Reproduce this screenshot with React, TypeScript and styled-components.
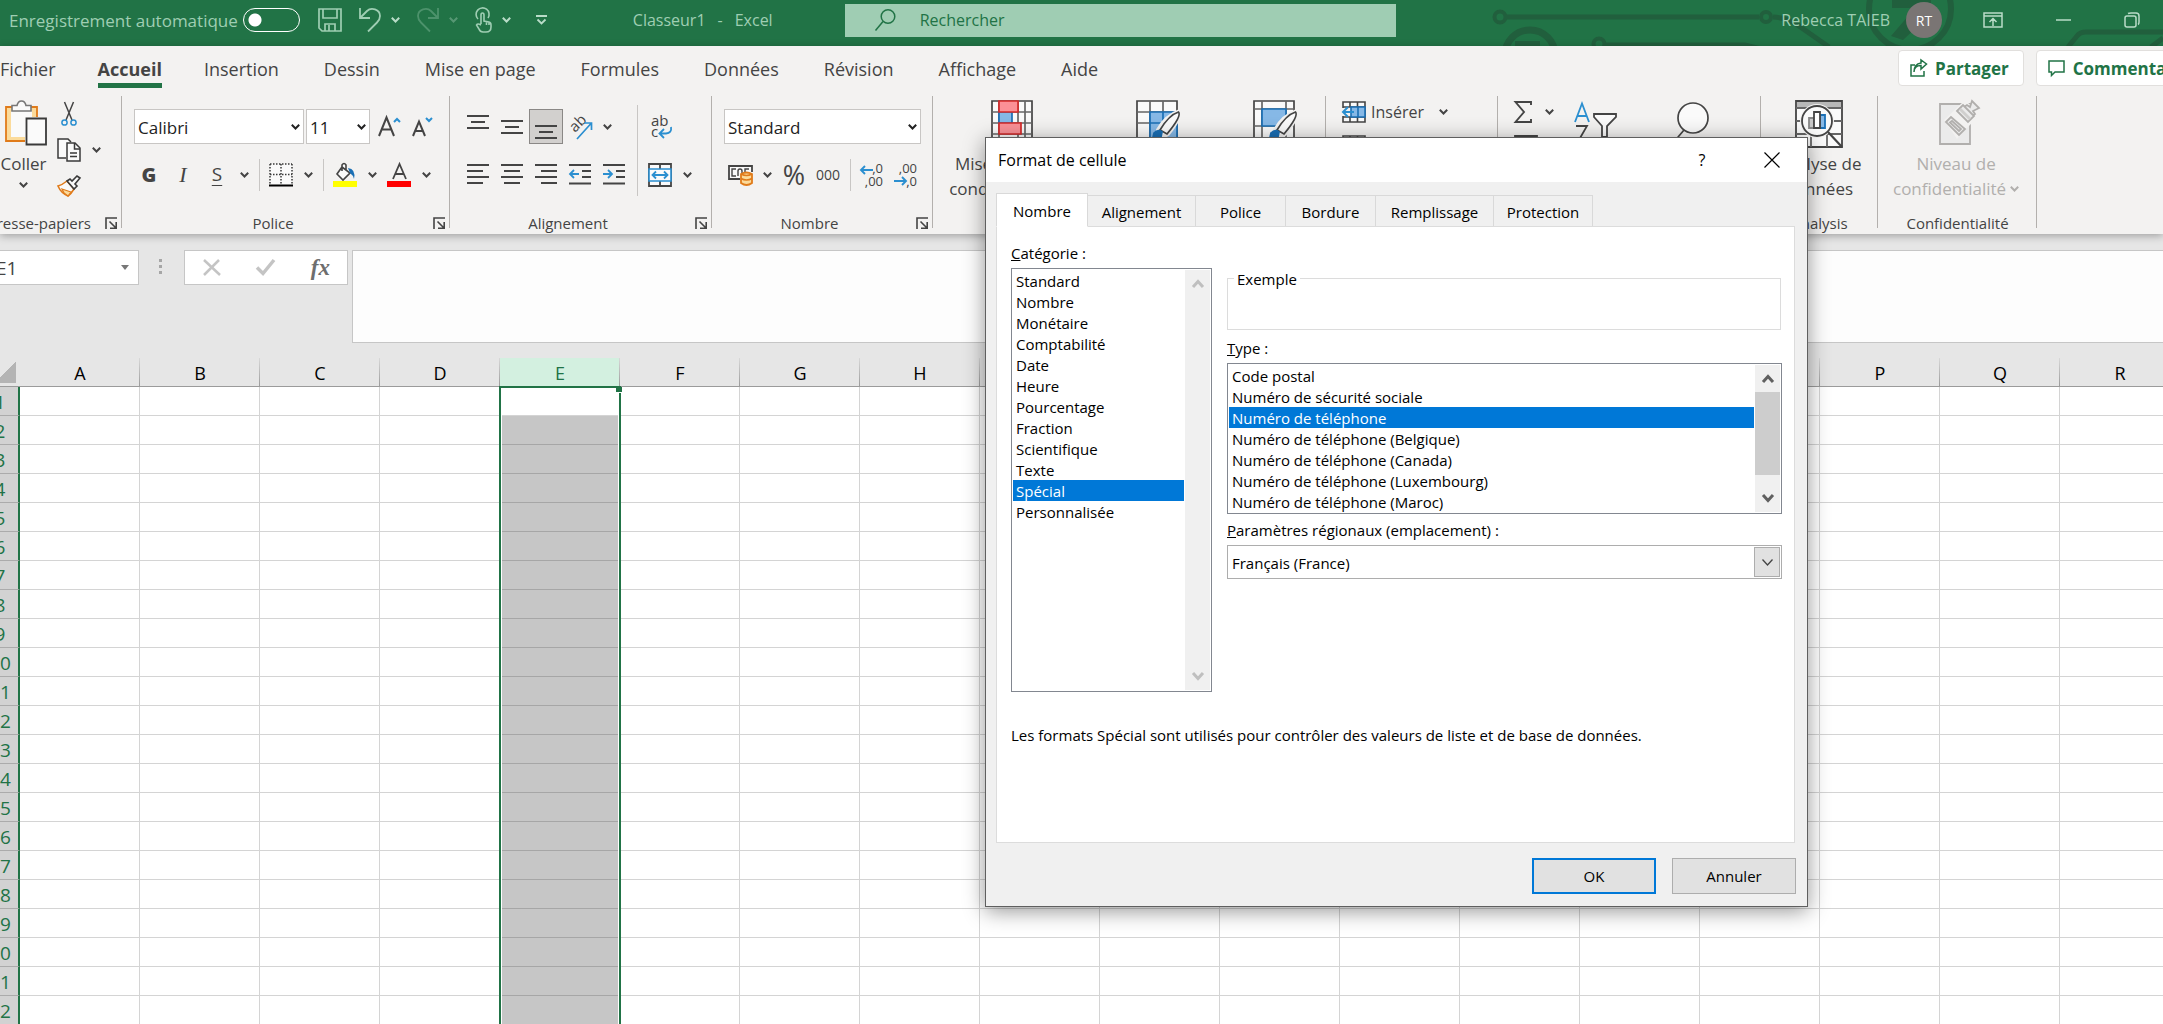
import React, { useState } from "react";
import styled, { createGlobalStyle, css } from "styled-components";

const GREEN = "#217346";
const INK = "#444444";
const BLUE = "#2b8fd0";

const GlobalStyle = createGlobalStyle`
  *, *::before, *::after { box-sizing: border-box; }
  html, body, #root { height: 100%; }
  body {
    margin: 0;
    overflow: hidden;
    font-family: "Open Sans", "Noto Sans", sans-serif;
    font-size: 15px;
    color: ${INK};
    background: #e6e6e6;
  }
  button, input, select, textarea { font: inherit; color: inherit; margin: 0; }
  svg { display: block; flex: none; overflow: visible; }
`;

const Window = styled.div`
  display: flex;
  flex-direction: column;
  height: 100vh;
  overflow: hidden;
  position: relative;
`;

const PlainButton = styled.button`
  display: flex;
  align-items: center;
  justify-content: center;
  padding: 0;
  border: 0;
  background: transparent;
  white-space: nowrap;
`;

/* ---------- title bar ---------- */

const TitleBar = styled.header`
  position: relative;
  flex: none;
  display: flex;
  align-items: center;
  height: 46px;
  padding: 0 23px 6px 9px;
  background: ${GREEN};
  color: #9fceb3;
  font-size: 16px;
  white-space: nowrap;
`;

const Circuit = styled.svg`
  position: absolute;
  top: 0;
  right: 0;
`;

const AutoSave = styled.label`
  display: flex;
  align-items: center;
  gap: 5px;
  font-size: 17px;
`;

const Toggle = styled.input`
  appearance: none;
  width: 57px;
  height: 24px;
  border: 1px solid #fff;
  border-radius: 12px;
  background: radial-gradient(circle at 11px 11px, #fff 6px, transparent 7px);
`;

const QuickAccess = styled.div`
  display: flex;
  align-items: center;
  gap: 17px;
  margin-left: 18px;
`;

const QuickPair = styled.div<{ $dim?: boolean }>`
  display: flex;
  align-items: center;
  gap: 10px;
  opacity: ${(p) => (p.$dim ? 0.35 : 1)};
`;

const CustomizeButton = styled(PlainButton)`
  margin-left: 8px;
`;

const DocTitle = styled.div`
  display: flex;
  gap: 12px;
  margin-left: 86px;
`;

const SearchBox = styled.label`
  display: flex;
  align-items: center;
  gap: 24px;
  flex: 0 1 551px;
  height: 33px;
  margin-left: 72px;
  padding-left: 30px;
  background: #9fcdb3;
  color: ${GREEN};
`;

const SearchInput = styled.input`
  flex: 1;
  min-width: 0;
  border: 0;
  padding: 0;
  outline: 0;
  background: transparent;
  &::placeholder { color: ${GREEN}; opacity: 1; }
`;

const UserArea = styled.div`
  position: relative;
  display: flex;
  align-items: center;
  gap: 16px;
  margin-left: auto;
`;

const Avatar = styled.span`
  display: flex;
  align-items: center;
  justify-content: center;
  width: 36px;
  height: 36px;
  border-radius: 50%;
  background: #7a7574;
  color: #fff;
  font-size: 14px;
`;

const WindowButtons = styled.div`
  position: relative;
  display: flex;
  align-items: center;
  gap: 53px;
  margin-left: 41px;
`;

/* ---------- ribbon ---------- */

const RibbonShell = styled.section`
  flex: none;
  position: relative;
  background: #f3f2f1;
  box-shadow: 0 2px 8px rgba(0, 0, 0, 0.3);
`;

const TabRow = styled.div`
  display: flex;
  align-items: center;
  height: 50px;
  padding-bottom: 6px;
`;

const TabList = styled.nav`
  display: flex;
  gap: 45px;
  font-size: 18px;
`;

const RibbonTab = styled.button<{ $active?: boolean }>`
  height: 40px;
  margin: ${(p) => (p.$active ? "0 -3px" : "0")};
  padding: 2px 0 0;
  border: 0;
  background: ${(p) => (p.$active ? `linear-gradient(${GREEN}, ${GREEN}) bottom / 100% 5px no-repeat` : "transparent")};
  font-weight: ${(p) => (p.$active ? 700 : 400)};
  line-height: 26px;
  white-space: nowrap;
`;

const ShareArea = styled.div`
  display: flex;
  gap: 12px;
  flex: none;
  width: 265px;
  margin-left: auto;
`;

const ShareButton = styled(PlainButton)`
  flex: none;
  gap: 8px;
  height: 36px;
  padding: 0 14px 0 11px;
  border: 1px solid #e1dfdd;
  border-radius: 4px;
  background: #fff;
  color: ${GREEN};
  font-size: 17px;
  font-weight: 700;
`;

const RibbonBody = styled.div`
  display: flex;
  height: 138px;
`;

const Group = styled.div<{ $w: number }>`
  flex: none;
  display: flex;
  flex-direction: column;
  width: ${(p) => p.$w}px;
  background: linear-gradient(#b3b0ad, #b3b0ad) right top / 1px 132px no-repeat;
`;

const GroupContent = styled.div<{ $pad?: number }>`
  flex: 1;
  display: flex;
  padding-left: ${(p) => p.$pad ?? 0}px;
`;

const GroupFoot = styled.div`
  display: flex;
  align-items: center;
  justify-content: center;
  height: 24px;
  padding: 2px 5px 0;
  font-size: 15px;
  line-height: 22px;
  white-space: nowrap;
`;

const FootLabel = styled.span<{ $end?: boolean; $launcher?: boolean }>`
  flex: 1;
  min-width: 0;
  display: flex;
  justify-content: ${(p) => (p.$end ? "flex-end" : "center")};
  padding-right: ${(p) => (p.$launcher ? 14 : 0)}px;
`;

const ToolStack = styled.div`
  display: flex;
  flex-direction: column;
  gap: 13px;
  padding-top: 13px;
`;

const ToolRow = styled.div<{ $pad?: number }>`
  display: flex;
  align-items: center;
  height: 35px;
  padding-left: ${(p) => p.$pad ?? 0}px;
`;

const ToolButton = styled(PlainButton)<{ $on?: boolean }>`
  width: 34px;
  height: 35px;
  ${(p) =>
    p.$on &&
    css`
      background: #d2d0ce;
      border: 1px solid #8a8886;
    `}
`;

const DropButton = styled(PlainButton)`
  width: 20px;
  height: 35px;
`;

const Divider = styled.span`
  width: 1px;
  height: 32px;
  margin: 0 4px 0 5px;
  background: #c8c6c4;
`;

const TallDivider = styled.span`
  width: 1px;
  height: 91px;
  margin: 9px 5px 0 6px;
  background: #c8c6c4;
`;

const ComboWrap = styled.div<{ $w: number }>`
  position: relative;
  width: ${(p) => p.$w}px;
  height: 35px;
  margin-right: 2px;
  svg {
    position: absolute;
    right: 4px;
    top: 15px;
    pointer-events: none;
  }
`;

const Combo = styled.select`
  appearance: none;
  width: 100%;
  height: 100%;
  padding: 2px 16px 0 3px;
  border: 1px solid #c8c6c4;
  border-radius: 0;
  background: #fff;
  color: #222;
  font-size: 17px;
`;

const Glyph = styled.span<{ $size: number; $weight?: number; $italic?: boolean; $line?: boolean }>`
  font-size: ${(p) => p.$size}px;
  font-weight: ${(p) => p.$weight ?? 400};
  font-style: ${(p) => (p.$italic ? "italic" : "normal")};
  font-family: ${(p) => (p.$italic ? '"Liberation Serif", serif' : "inherit")};
  text-decoration: ${(p) => (p.$line ? "underline" : "none")};
  text-underline-offset: 4px;
  line-height: 1;
`;

const BigButton = styled.button<{ $disabled?: boolean }>`
  display: flex;
  flex-direction: column;
  align-items: center;
  align-self: flex-start;
  padding: 4px 0 0;
  border: 0;
  background: transparent;
  color: ${(p) => (p.$disabled ? "#b1afad" : INK)};
  font-size: 17px;
  line-height: 25px;
  white-space: nowrap;
`;

const BigIcon = styled.span<{ $pad?: number }>`
  display: flex;
  align-items: flex-start;
  justify-content: center;
  height: 51px;
  padding-left: ${(p) => p.$pad ?? 0}px;
`;

const CaptionLine = styled.span`
  display: flex;
  align-items: center;
  gap: 4px;
`;

const PasteColumn = styled.div`
  display: flex;
  flex-direction: column;
  align-items: center;
  gap: 6px;
`;

const ClipColumn = styled.div`
  display: flex;
  flex-direction: column;
  gap: 1px;
  margin-left: 5px;
`;

const StyleGrid = styled.div`
  display: grid;
  grid-template-columns: 150px 142px 92px;
`;

const CellStack = styled.div`
  display: flex;
  flex-direction: column;
  align-items: flex-start;
  gap: 12px;
  padding-top: 5px;
`;

const CellButton = styled(PlainButton)`
  gap: 5px;
  height: 22px;
  font-size: 16px;
`;

const EditIcons = styled.div`
  display: flex;
  align-items: flex-start;
  gap: 55px;
  padding: 6px 0 0 20px;
`;

const Gap = styled.span<{ $w: number }>`
  width: ${(p) => p.$w}px;
`;

/* ---------- formula bar ---------- */

const FormulaBar = styled.section`
  flex: none;
  display: flex;
  align-items: flex-start;
  padding: 16px 0 15px;
`;

const NameBox = styled.label`
  display: flex;
  align-items: center;
  width: 159px;
  height: 35px;
  margin-left: -20px;
  padding: 0 9px 0 15px;
  border: 1px solid #c6c6c6;
  background: #fff;
`;

const NameInput = styled.input`
  flex: 1;
  min-width: 0;
  padding: 0;
  border: 0;
  background: transparent;
  font-size: 19px;
`;

const Grip = styled.span`
  display: flex;
  flex-direction: column;
  gap: 3px;
  margin: 9px 22px 0 20px;
  i { width: 3px; height: 3px; background: #a6a6a6; }
`;

const FormulaButtons = styled.div`
  display: flex;
  align-items: center;
  justify-content: space-between;
  width: 164px;
  height: 35px;
  padding: 0 17px 0 18px;
  border: 1px solid #c6c6c6;
  background: #fff;
`;

const FxLabel = styled.span`
  font: italic 700 23px/1 "Liberation Serif", serif;
  color: #6e6e6e;
`;

const FormulaInput = styled.textarea`
  flex: 1;
  height: 93px;
  margin-left: 4px;
  border: 1px solid #c6c6c6;
  border-right: 0;
  background: #fdfdfd;
  resize: none;
`;

/* ---------- sheet ---------- */

const SheetArea = styled.main`
  position: relative;
  flex: 1;
  min-height: 0;
  overflow: hidden;
`;

const Sheet = styled.table`
  margin-left: -20px;
  table-layout: fixed;
  width: 2200px;
  border-collapse: separate;
  border-spacing: 0;
  background: #fff;
  font-size: 18px;
`;

const Corner = styled.th`
  height: 29px;
  padding: 0;
  border-bottom: 1px solid #9b9b9b;
  background:
    linear-gradient(135deg, transparent 50%, #b4b4b4 51%) 14px 4px / 22px 21px no-repeat,
    #e6e6e6;
`;

const ColHead = styled.th<{ $on: boolean }>`
  height: 29px;
  padding: 2px 0 0;
  border-bottom: 1px solid #9b9b9b;
  background:
    linear-gradient(#d8d8d8, #9b9b9b) right top / 1px 100% no-repeat,
    ${(p) => (p.$on ? "#d3f0e0" : "#e6e6e6")};
  color: ${(p) => (p.$on ? GREEN : "#000")};
  font-weight: 400;
  line-height: 26px;
`;

const RowHead = styled.th`
  height: 29px;
  padding: 2px 0 0 2px;
  border-right: 2px solid ${GREEN};
  border-bottom: 1px solid #ababab;
  background: #d2d2d2;
  color: ${GREEN};
  font-size: 19px;
  font-weight: 400;
  line-height: 26px;
`;

const Cell = styled.td<{ $on: boolean }>`
  height: 29px;
  padding: 0;
  border-right: 1px solid #d4d4d4;
  border-bottom: 1px solid ${(p) => (p.$on ? "#a6a6a6" : "#d4d4d4")};
  background: ${(p) => (p.$on ? "#c6c6c6" : "#fff")};
`;

const Selection = styled.div`
  position: absolute;
  top: 28px;
  left: 499px;
  width: 122px;
  height: 100%;
  border: 2px solid ${GREEN};
  border-bottom: 0;
  box-shadow: inset 1px 0 #fff, inset -1px 0 #fff;
  &::after {
    content: "";
    position: absolute;
    top: -1px;
    right: -3px;
    width: 6px;
    height: 6px;
    background: ${GREEN};
    border-bottom: 1px solid #fff;
  }
`;

/* ---------- dialog ---------- */

const Dialog = styled.section`
  position: absolute;
  top: 137px;
  left: 985px;
  display: flex;
  flex-direction: column;
  width: 823px;
  height: 770px;
  border: 1px solid #5f5f5f;
  background: #f0f0f0;
  color: #000;
  box-shadow: 0 4px 20px rgba(0, 0, 0, 0.42);
`;

const DialogTitle = styled.header`
  display: flex;
  align-items: center;
  height: 44px;
  padding: 0 27px 0 12px;
  background: #fff;
  font-size: 16px;
`;

const DialogTitleText = styled.h1`
  flex: 1;
  margin: 0;
  font-size: 16px;
  font-weight: 400;
`;

const TitleButton = styled(PlainButton)`
  width: 16px;
  height: 24px;
  margin-left: 54px;
`;

const DialogTabs = styled.div`
  display: flex;
  align-items: flex-end;
  height: 45px;
  padding: 0 10px;
`;

const DialogTab = styled.button<{ $w: number; $active?: boolean }>`
  width: ${(p) => p.$w}px;
  height: 32px;
  padding: 1px 0 0;
  border: 1px solid #d9d9d9;
  border-left-width: 0;
  background: #f0f0f0;
  ${(p) =>
    p.$active &&
    css`
      z-index: 1;
      height: 34px;
      border-left-width: 1px;
      border-bottom-color: #fff;
      background: #fff;
    `}
`;

const Panel = styled.div`
  flex: 1;
  display: flex;
  flex-direction: column;
  margin: -1px 12px 0 10px;
  padding: 16px 12px 0 14px;
  border: 1px solid #dcdcdc;
  background: #fff;
`;

const PanelColumns = styled.div`
  display: flex;
  gap: 15px;
`;

const Field = styled.div<{ $w?: number }>`
  display: flex;
  flex-direction: column;
  width: ${(p) => (p.$w ? `${p.$w}px` : "auto")};
`;

const FieldLabel = styled.label`
  height: 25px;
  line-height: 21px;
`;

const RightColumn = styled.div`
  flex: 1;
  padding-top: 24px;
`;

const ListFrame = styled.div<{ $h: number }>`
  display: flex;
  height: ${(p) => p.$h}px;
  padding: 1px;
  border: 1px solid #828790;
  background: #fff;
`;

const ListSelect = styled.select`
  flex: 1;
  min-width: 0;
  height: 100%;
  padding: 0;
  border: 0;
  border-radius: 0;
  outline: 0;
  overflow: hidden;
  background: #fff;
  scrollbar-width: none;
  option {
    height: 21px;
    min-height: 21px;
    padding: 1px 3px 0;
    line-height: 20px;
    color: #000;
  }
  option:checked {
    background: #0078d7 linear-gradient(#0078d7, #0078d7);
    -webkit-text-fill-color: #fff;
  }
`;

const ScrollTrack = styled.div`
  display: flex;
  flex-direction: column;
  width: 25px;
  margin-left: 1px;
  background: #f0f0f0;
`;

const ScrollArrow = styled(PlainButton)`
  height: 27px;
`;

const ScrollThumb = styled.span<{ $h: number }>`
  height: ${(p) => p.$h}px;
  background: #cdcdcd;
`;

const Spring = styled.span`
  flex: 1;
`;

const Example = styled.fieldset`
  height: 63px;
  margin: 0 1px 8px 0;
  padding: 0 6px;
  border: 1px solid #dcdcdc;
  legend { padding: 1px 3px 0; line-height: 22px; }
`;

const RegionField = styled(Field)`
  margin-top: 6px;
`;

const RegionWrap = styled.div`
  display: flex;
  position: relative;
  height: 34px;
`;

const RegionSelect = styled.select`
  appearance: none;
  flex: 1;
  padding: 1px 30px 0 4px;
  border: 1px solid #adadad;
  border-radius: 0;
  background: #fff;
`;

const RegionArrow = styled.span`
  position: absolute;
  top: 2px;
  right: 2px;
  display: flex;
  align-items: center;
  justify-content: center;
  width: 26px;
  height: 30px;
  border: 1px solid #adadad;
  background: #e1e1e1;
  pointer-events: none;
`;

const Hint = styled.p`
  margin: 32px 0 0;
  line-height: 22px;
`;

const DialogFoot = styled.footer`
  display: flex;
  justify-content: flex-end;
  gap: 16px;
  padding: 15px 11px 12px;
`;

const DialogButton = styled.button<{ $primary?: boolean }>`
  width: 124px;
  height: 36px;
  padding: 0;
  border: ${(p) => (p.$primary ? "2px solid #0078d7" : "1px solid #adadad")};
  background: #e1e1e1;
`;

/* ---------- icons ---------- */

const Chevron = ({ color = INK }: { color?: string }) => (
  <svg width={9} height={6} viewBox="0 0 9 6" fill="none" stroke={color} strokeWidth={2}>
    <path d="M0.8 0.8 4.5 4.5 8.2 0.8" />
  </svg>
);

const ScrollGlyph = ({ up, color }: { up?: boolean; color: string }) => (
  <svg width={12} height={9} viewBox="0 0 12 9" fill="none" stroke={color} strokeWidth={3}>
    <path d={up ? "M1 8 6 2.5 11 8" : "M1 1 6 6.5 11 1"} />
  </svg>
);

const Launcher = () => (
  <svg width={12} height={12} viewBox="0 0 12 12" fill="none" stroke={INK} strokeWidth={1.6}>
    <path d="M1 12V1H12M4.5 4.5 10.5 10.5M11.2 5V11.2H5" />
  </svg>
);

const SaveIcon = () => (
  <svg width={24} height={24} viewBox="0 0 24 24" fill="none" stroke="#9fceb3" strokeWidth={1.7}>
    <path d="M1 1H23V23H4L1 20ZM5 1V10H19V1M7 23V16H17V23M11 17V23" />
  </svg>
);

const UndoIcon = ({ flip }: { flip?: boolean }) => (
  <svg width={22} height={24} viewBox="0 0 22 24" fill="none" stroke="#9fceb3" strokeWidth={1.8}>
    <g transform={flip ? "translate(22 0) scale(-1 1)" : undefined}>
      <path d="M1 0V10H11M1.5 9.5 8 3C12-1 21 1 21 8 21 11 20 12.500 18 14.500L9 23.500" />
    </g>
  </svg>
);

const TouchIcon = () => (
  <svg width={17} height={25} viewBox="0 0 17 25" fill="none" stroke="#9fceb3" strokeWidth={1.6}>
    <path d="M3 11A6.500 6.500 0 1 1 13 10M6 16V7Q6 5 7.500 5T9 7V13L14 14Q16 14.500 16 17V19Q16 24 11 24H8Q5 24 4 21L1.500 17Q2.500 15 6 17M11.500 13.500V17M14 14V17" />
  </svg>
);

const CustomizeIcon = () => (
  <svg width={11} height={10} viewBox="0 0 11 10" fill="none" stroke="#b9dcc8" strokeWidth={1.8}>
    <path d="M0 1H11M1.500 4.500 5.500 8.500 9.500 4.500" />
  </svg>
);

const SearchIcon = () => (
  <svg width={21} height={22} viewBox="0 0 21 22" fill="none" stroke={GREEN} strokeWidth={1.5}>
    <circle cx={13} cy={7.500} r={6.800} />
    <path d="M8 12.500 0.500 21.500" />
  </svg>
);

const CircuitArt = () => (
  <Circuit width={680} height={46} viewBox="0 0 680 46" fill="none" stroke="#215f3d" strokeWidth={6}>
    <circle cx={17} cy={17} r={5.500} strokeWidth={4} />
    <path d="M24 17H276M290 17Q306 18 316 26L346 47" strokeWidth={5} />
    <circle cx={283} cy={17} r={5} strokeWidth={4} />
    <circle cx={47} cy={55} r={25} strokeWidth={7} />
    <path d="M32 41H57V47H32Z" fill="#215f3d" stroke="none" />
    <circle cx={116} cy={44} r={5.500} strokeWidth={4} />
    <path d="M122 44.500H262L276 48" strokeWidth={4} />
    <circle cx={427} cy={9} r={41} strokeWidth={6} />
    <path d="M409 8V0H448V14L420 40 408 36 432 8Z" fill="#215f3d" stroke="none" />
    <path d="M585 47 594 36Q597 32 603 32H680M668 47 680 38" strokeWidth={5} />
  </Circuit>
);

const RibbonModeIcon = () => (
  <svg width={20} height={16} viewBox="0 0 20 16" fill="none" stroke="#b9dcc8" strokeWidth={1.500}>
    <path d="M1 1H19V15H1ZM1 4H19M10 14V7M6.500 10 10 6.500 13.500 10" />
  </svg>
);

const RestoreIcon = () => (
  <svg width={16} height={16} viewBox="0 0 16 16" fill="none" stroke="#b9dcc8" strokeWidth={1.500}>
    <rect x={1} y={4} width={11} height={11} rx={2} />
    <path d="M4 1.500Q5 1 7 1H12Q15 1 15 4V10Q15 12 14 12.500" />
  </svg>
);

const ShareIcon = () => (
  <svg width={17} height={18} viewBox="0 0 17 18" fill="none" stroke={GREEN} strokeWidth={1.500}>
    <path d="M5 6H1V17H14V12M4 13Q4 6.500 11 6.500V10L16.500 5 11 1V4Q4 5 4 13Z" />
  </svg>
);

const CommentIcon = () => (
  <svg width={17} height={16} viewBox="0 0 17 16" fill="none" stroke={GREEN} strokeWidth={1.500}>
    <path d="M1 1H16V12H7L3.500 15.500V12H1Z" />
  </svg>
);

const PasteIcon = () => (
  <svg width={42} height={46} viewBox="0 0 42 46" fill="none">
    <path d="M1 7H32V41H1Z" fill="#fbdb9b" stroke="#e07b1a" strokeWidth={1.800} />
    <path d="M6 11H27V37H6Z" fill="#fafafa" />
    <path d="M7 11V5.500H12Q13 1 16.500 1T21 5.500H26V11Z" fill="#fafafa" stroke="#777" strokeWidth={1.600} />
    <path d="M20 17H42V46H20Z" fill="#f3f2f1" />
    <path d="M21.500 18.500H41V44.500H21.500Z" fill="#fafafa" stroke="#3a3a3a" strokeWidth={1.800} />
  </svg>
);

const CutIcon = () => (
  <svg width={16} height={24} viewBox="0 0 16 24" fill="none" strokeWidth={1.500}>
    <path d="M3.500 0 11 18M12.500 0 5 18" stroke={INK} />
    <circle cx={3.500} cy={20.500} r={2.600} stroke={BLUE} />
    <circle cx={12.500} cy={20.500} r={2.600} stroke={BLUE} />
  </svg>
);

const CopyIcon = () => (
  <svg width={24} height={24} viewBox="0 0 24 24" fill="none" stroke="#3a3a3a" strokeWidth={1.500}>
    <path d="M9 20H1V1H11L14 4" fill="#fafafa" />
    <path d="M10 5H18L23 10V23H10Z" fill="#fafafa" />
    <path d="M17.500 5V11H23M13 15H20M13 18.500H20" />
  </svg>
);

const PainterIcon = () => (
  <svg width={24} height={22} viewBox="0 0 24 22" fill="none" strokeWidth={1.600}>
    <path d="M1 11Q5 10 10 6L17 14Q14 19 11 21Q4 18 1 11Z" fill="#fafafa" stroke="#e07b1a" />
    <path d="M5 14 14 17 11 21 7 18Z" fill="#fbdb9b" stroke="#e07b1a" strokeWidth={1.200} />
    <path d="M10 6 13 4 15 6 20 1 23 3 18 9 20 11 17 14Z" fill="#fafafa" stroke="#3a3a3a" />
  </svg>
);

const GrowFont = ({ down }: { down?: boolean }) => (
  <svg width={23} height={22} viewBox="0 0 23 22" fill="none">
    <path
      d={down ? "M1 20 7 5.500 13 20M3.500 15H10.500" : "M1 20 8.500 1.500 16 20M4 13.500H13"}
      stroke={INK}
      strokeWidth={2}
    />
    <path d={down ? "M14 2 17 5 20 2" : "M16 6 19 3 22 6"} stroke={BLUE} strokeWidth={2} />
  </svg>
);

const BordersIcon = () => (
  <svg width={24} height={24} viewBox="0 0 24 24" fill="none" stroke="#3a3a3a">
    <path d="M1 1H23V22H1Z" fill="#fafafa" stroke="none" />
    <path d="M1 1H23M1 11.500H23M1 1V21M12 1V21M23 1V21" strokeWidth={1.500} strokeDasharray="1.500 1.500" />
    <path d="M0 22.500H24" stroke="#000" strokeWidth={2} />
  </svg>
);

const FillIcon = () => (
  <svg width={24} height={24} viewBox="0 0 24 24" fill="none">
    <path d="M9 4 17 10 10 17 4 11ZM9 8V2Q11-1 13 2V7" fill="#fafafa" stroke={INK} strokeWidth={1.600} />
    <path d="M15 5Q23 6 21 16 20 12 17 10Z" fill="#1a6fb5" />
    <path d="M0 18H24V24H0Z" fill="#ffff00" />
  </svg>
);

const FontColorIcon = () => (
  <svg width={24} height={24} viewBox="0 0 24 24" fill="none">
    <path d="M6 16 12.500 1 19 16M8 11H17" stroke={INK} strokeWidth={1.800} />
    <path d="M0 18H24V24H0Z" fill="#ff0000" />
  </svg>
);

type Bar = [number, number];
const Lines = ({ bars, h, step, shift = 0 }: { bars: Bar[]; h: number; step: number; shift?: number }) => (
  <svg width={22} height={h} viewBox={`0 0 22 ${h}`} stroke={INK} strokeWidth={1.800}>
    <path d={bars.map(([a, b], i) => `M${a} ${1 + shift + i * step}H${b}`).join("")} />
  </svg>
);

const OrientationIcon = () => (
  <svg width={24} height={26} viewBox="0 0 24 26" fill="none">
    <text x={0} y={0} fontSize={15} fill={INK} transform="translate(7 19) rotate(-45)">ab</text>
    <path d="M9 25 23 9.500M16 9H23.500V16" stroke={BLUE} strokeWidth={1.700} />
  </svg>
);

const WrapIcon = () => (
  <svg width={22} height={26} viewBox="0 0 22 26" fill="none">
    <text x={2} y={12} fontSize={15} fill={INK}>ab</text>
    <text x={2} y={23} fontSize={15} fill={INK}>c</text>
    <path d="M22 13Q23 19 17 19.500H11M15 15 10.500 19.500 15 24" stroke={BLUE} strokeWidth={1.800} />
  </svg>
);

const IndentIcon = ({ out }: { out?: boolean }) => (
  <svg width={22} height={22} viewBox="0 0 22 22" fill="none">
    <path d="M0 1H22M13 7H22M13 13H22M0 19.500H22" stroke={INK} strokeWidth={1.800} />
    <path d={out ? "M10 10H1M5 6 1 10 5 14" : "M0 10H9M5 6 9 10 5 14"} stroke={BLUE} strokeWidth={1.800} />
  </svg>
);

const MergeIcon = () => (
  <svg width={24} height={24} viewBox="0 0 24 24" fill="none">
    <path d="M1 1H23V23H1ZM12 1V6M12 18V23" stroke={INK} strokeWidth={1.800} fill="#fafafa" />
    <path d="M1 6H23V18H1Z" stroke={BLUE} strokeWidth={1.600} fill="#fafafa" />
    <path d="M5 12H19M8 8.500 4.500 12 8 15.500M16 8.500 19.500 12 16 15.500" stroke={BLUE} strokeWidth={1.800} />
  </svg>
);

const CurrencyIcon = () => (
  <svg width={25} height={22} viewBox="0 0 25 22" fill="none">
    <path d="M12 15H1V2H24V8" stroke={INK} strokeWidth={1.800} fill="#fafafa" />
    <path d="M8 5H4V12H8M14 11V7Q14 5 12 5T10 7V12M17 8V5H21" stroke={INK} strokeWidth={1.400} />
    <path d="M13 10Q18.500 7 24 10V19Q18.500 23 13 19Z" fill="#fbdb9b" stroke="#e07b1a" strokeWidth={1.800} />
    <path d="M13 10Q18.500 13 24 10M13 14.500Q18.500 17.500 24 14.500" stroke="#e07b1a" strokeWidth={1.600} />
  </svg>
);

const DecimalIcon = ({ less }: { less?: boolean }) => (
  <svg width={24} height={24} viewBox="0 0 24 24" fill="none">
    <text x={23} y={10} fontSize={13} fill={INK} textAnchor="end">{less ? ",00" : ",0"}</text>
    <text x={23} y={23} fontSize={13} fill={INK} textAnchor="end">{less ? ",0" : ",00"}</text>
    <path
      d={less ? "M0 18H12M8 14 12 18 8 22" : "M13 7H1M5 3 1 7 5 11"}
      stroke={BLUE}
      strokeWidth={1.900}
    />
  </svg>
);

const ConditionalIcon = () => (
  <svg width={42} height={44} viewBox="0 0 42 44" fill="none" strokeWidth={1.700}>
    <path d="M1 1H41V43H1Z" fill="#fafafa" stroke={INK} />
    <path d="M1 12H41M1 23H41M1 34H41M8 1V43M27 1V43M34 1V43" stroke="#666" />
    <path d="M8 12H21V23H8Z" fill="#86b8e6" stroke="#1a6fb5" />
    <path d="M8 1H27V12H8ZM8 23H30V34H8Z" fill="#fb9096" stroke="#d42a2a" />
  </svg>
);

const TableStyleIcon = ({ cell }: { cell?: boolean }) => (
  <svg width={45} height={44} viewBox="0 0 45 44" fill="none" strokeWidth={1.700}>
    <path d="M1 1H41V43H1Z" fill="#fafafa" stroke={INK} />
    {cell ? (
      <>
        <path d="M1 9H41M1 26H41M9 1V43M33 1V43" stroke="#666" />
        <path d="M9 9H33V26H9Z" fill="#86b8e6" stroke="#1a6fb5" />
      </>
    ) : (
      <>
        <path d="M1 12H41M1 23H41M14 1V43M27 1V43" stroke="#666" />
        <path d="M14 12H41V43H14ZM27 12V43M14 23H41" fill="#86b8e6" stroke="#1a6fb5" />
      </>
    )}
    <path d="M22 30Q30 16 43 11.500Q46 16 32 34L22 40Z" fill="#fafafa" stroke="#f3f2f1" strokeWidth={4} />
    <path d="M24 30Q33 15 42.500 12Q46 16 31 34Z" fill="#fafafa" stroke={INK} />
    <path d="M18 33Q22 29 26 32L24 42H16Z" fill="#1a6fb5" stroke="#1a6fb5" />
  </svg>
);

const CellsIcon = () => (
  <svg width={24} height={22} viewBox="0 0 24 22" fill="none" strokeWidth={1.600}>
    <path d="M1 1H23V21H1ZM1 6H23M1 16H23M8 1V6M15.500 1V6M8 16V21M15.500 16V21" fill="#fafafa" stroke={INK} />
    <path d="M9 6H23V16H9ZM16 6V16" fill="#86b8e6" stroke="#1a6fb5" />
    <path d="M0 7H8V15H0Z" fill="#f3f2f1" />
    <path d="M12 11H1M6 6 1 11 6 16" stroke={BLUE} strokeWidth={2} />
  </svg>
);

const SumIcon = () => (
  <svg width={18} height={22} viewBox="0 0 18 22" fill="none" stroke={INK} strokeWidth={1.900}>
    <path d="M17 4V1H1.500L10 11 1.500 21H17V18" />
  </svg>
);

const FillDownIcon = () => (
  <svg width={24} height={22} viewBox="0 0 24 22" fill="#fafafa" stroke={INK} strokeWidth={1.800}>
    <path d="M1 1H23V21H1Z" />
  </svg>
);

const SortFilterIcon = () => (
  <svg width={43} height={44} viewBox="0 0 43 44" fill="none" strokeWidth={1.800}>
    <path d="M1 20 8 1.500 15 20M3.500 14H12.500" stroke={BLUE} />
    <path d="M2 24H13L2 43H14" stroke={INK} />
    <path d="M20 12H42V15L33 24V35H28V24L20 15Z" fill="#fafafa" stroke={INK} />
  </svg>
);

const FindIcon = () => (
  <svg width={38} height={44} viewBox="0 0 38 44" fill="none" stroke={INK} strokeWidth={1.700}>
    <circle cx={21} cy={16} r={15} fill="#fafafa" />
    <path d="M12 28 1 41" />
  </svg>
);

const AnalysisIcon = () => (
  <svg width={48} height={48} viewBox="0 0 48 48" fill="none" strokeWidth={1.800}>
    <path d="M1 1H47V47H1Z" fill="#fafafa" stroke={INK} />
    <path d="M2 2H46V8H2Z" fill="#b8b8b8" />
    <path d="M1 8H47M1 21H47M1 34H47M16 34V47M32 34V47" stroke="#666" />
    <circle cx={22} cy={21} r={17} fill="#f3f2f1" stroke="none" />
    <circle cx={22} cy={21} r={15} fill="#fafafa" stroke={INK} />
    <path d="M33 32 47 47" stroke={INK} strokeWidth={2.200} />
    <path d="M14 18H19V28H14Z" fill="#c8c8c8" stroke="#888" />
    <path d="M25 15H30V28H25Z" fill="#86b8e6" stroke="#1a6fb5" />
    <path d="M19 12H25V28H19Z" fill="#fff" stroke={INK} />
  </svg>
);

const SensitivityIcon = () => (
  <svg width={41} height={46} viewBox="0 0 41 46" fill="none" stroke="#b1afad" strokeWidth={1.800}>
    <path d="M1 4H31V44H1Z" fill="#ebebeb" />
    <path d="M5 20 26 0 41 14 18 39Z" fill="#f3f2f1" stroke="none" />
    <path d="M7 22 12 17 26 29 20 35ZM11 22.500 13 21 22 29 20 31Z" fill="#ebebeb" />
    <path d="M25 7 28 5 31 7 33 1 40 8 34 11 36 14 33 16" fill="#ebebeb" />
    <path d="M18 11 24 5 35 16 29 22Z" fill="#ebebeb" />
    <path d="M20 10 30 20 32 18 22 8Z" fill="#d0cfce" stroke="none" />
  </svg>
);

/* ---------- data ---------- */

const TABS = ["Fichier", "Accueil", "Insertion", "Dessin", "Mise en page", "Formules", "Données", "Révision", "Affichage", "Aide"];
const COLUMNS = "ABCDEFGHIJKLMNOPQR".split("");
const ROWS = Array.from({ length: 22 }, (_, i) => i + 1);
const SELECTED = "E";

const CATEGORIES = [
  "Standard", "Nombre", "Monétaire", "Comptabilité", "Date", "Heure", "Pourcentage",
  "Fraction", "Scientifique", "Texte", "Spécial", "Personnalisée",
];
const TYPES = [
  "Code postal", "Numéro de sécurité sociale", "Numéro de téléphone", "Numéro de téléphone (Belgique)",
  "Numéro de téléphone (Canada)", "Numéro de téléphone (Luxembourg)", "Numéro de téléphone (Maroc)",
];
const DIALOG_TABS: [string, number][] = [
  ["Nombre", 92], ["Alignement", 108], ["Police", 90], ["Bordure", 90], ["Remplissage", 118], ["Protection", 99],
];

/* ---------- parts ---------- */

const Foot = ({ label, launcher, end }: { label: string; launcher?: boolean; end?: boolean }) => (
  <GroupFoot>
    <FootLabel $end={end} $launcher={launcher}>{label}</FootLabel>
    {launcher && (
      <PlainButton aria-label={`Options ${label}`}>
        <Launcher />
      </PlainButton>
    )}
  </GroupFoot>
);

const Drop = ({ label }: { label: string }) => (
  <DropButton aria-label={label}>
    <Chevron />
  </DropButton>
);

const ComboBox = ({ w, value, label }: { w: number; value: string; label: string }) => (
  <ComboWrap $w={w}>
    <Combo aria-label={label} defaultValue={value}>
      <option>{value}</option>
    </Combo>
    <Chevron color="#222" />
  </ComboWrap>
);

const Title = () => (
  <TitleBar>
    <CircuitArt />
    <AutoSave>
      Enregistrement automatique
      <Toggle type="checkbox" />
    </AutoSave>
    <QuickAccess>
      <PlainButton aria-label="Enregistrer"><SaveIcon /></PlainButton>
      <QuickPair>
        <PlainButton aria-label="Annuler la frappe"><UndoIcon /></PlainButton>
        <PlainButton aria-label="Historique"><Chevron color="#b9dcc8" /></PlainButton>
      </QuickPair>
      <QuickPair $dim>
        <PlainButton aria-label="Rétablir"><UndoIcon flip /></PlainButton>
        <PlainButton aria-label="Liste rétablir"><Chevron color="#b9dcc8" /></PlainButton>
      </QuickPair>
      <QuickPair>
        <PlainButton aria-label="Mode tactile"><TouchIcon /></PlainButton>
        <PlainButton aria-label="Options du mode tactile"><Chevron color="#b9dcc8" /></PlainButton>
      </QuickPair>
      <CustomizeButton aria-label="Personnaliser"><CustomizeIcon /></CustomizeButton>
    </QuickAccess>
    <DocTitle>
      <span>Classeur1</span>
      <span>-</span>
      <span>Excel</span>
    </DocTitle>
    <SearchBox>
      <SearchIcon />
      <SearchInput placeholder="Rechercher" />
    </SearchBox>
    <UserArea>
      <span>Rebecca TAIEB</span>
      <Avatar>RT</Avatar>
    </UserArea>
    <WindowButtons>
      <PlainButton aria-label="Affichage du ruban"><RibbonModeIcon /></PlainButton>
      <PlainButton aria-label="Réduire">
        <svg width={15} height={16} stroke="#b9dcc8" strokeWidth={1.500}><path d="M0 8H15" /></svg>
      </PlainButton>
      <PlainButton aria-label="Restaurer"><RestoreIcon /></PlainButton>
    </WindowButtons>
  </TitleBar>
);

const Ribbon = () => (
  <RibbonShell>
    <TabRow>
      <TabList>
        {TABS.map((t) => (
          <RibbonTab key={t} $active={t === "Accueil"}>{t}</RibbonTab>
        ))}
      </TabList>
      <ShareArea>
        <ShareButton><ShareIcon />Partager</ShareButton>
        <ShareButton><CommentIcon />Commentaires</ShareButton>
      </ShareArea>
    </TabRow>
    <RibbonBody>
      <Group $w={122}>
        <GroupContent>
          <PasteColumn>
            <BigButton>
              <BigIcon $pad={5}><PasteIcon /></BigIcon>
              Coller
            </BigButton>
            <Chevron />
          </PasteColumn>
          <ClipColumn>
            <ToolRow><ToolButton aria-label="Couper"><CutIcon /></ToolButton></ToolRow>
            <ToolRow><ToolButton aria-label="Copier"><CopyIcon /></ToolButton><Drop label="Options de copie" /></ToolRow>
            <ToolRow><ToolButton aria-label="Reproduire la mise en forme"><PainterIcon /></ToolButton></ToolRow>
          </ClipColumn>
        </GroupContent>
        <Foot label="Presse-papiers" launcher end />
      </Group>

      <Group $w={328}>
        <GroupContent $pad={10}>
          <ToolStack>
            <ToolRow $pad={2}>
              <ComboBox w={170} value="Calibri" label="Police" />
              <ComboBox w={64} value="11" label="Taille" />
              <ToolButton aria-label="Agrandir"><GrowFont /></ToolButton>
              <ToolButton aria-label="Réduire la police"><GrowFont down /></ToolButton>
            </ToolRow>
            <ToolRow>
              <ToolButton><Glyph $size={20} $weight={800}>G</Glyph></ToolButton>
              <ToolButton><Glyph $size={22} $italic>I</Glyph></ToolButton>
              <ToolButton><Glyph $size={19} $line>S</Glyph></ToolButton>
              <Drop label="Soulignement" />
              <Divider />
              <ToolButton aria-label="Bordures"><BordersIcon /></ToolButton>
              <Drop label="Choix des bordures" />
              <Divider />
              <ToolButton aria-label="Remplissage"><FillIcon /></ToolButton>
              <Drop label="Couleur de remplissage" />
              <ToolButton aria-label="Couleur de police"><FontColorIcon /></ToolButton>
              <Drop label="Choix de la couleur" />
            </ToolRow>
          </ToolStack>
        </GroupContent>
        <Foot label="Police" launcher />
      </Group>

      <Group $w={262}>
        <GroupContent $pad={11}>
          <ToolStack>
            <ToolRow>
              <ToolButton aria-label="Aligner en haut">
                <Lines h={22} step={6} shift={-1} bars={[[0, 22], [4, 18], [0, 22]]} />
              </ToolButton>
              <ToolButton aria-label="Aligner au centre">
                <Lines h={22} step={6} shift={4} bars={[[0, 22], [4, 18], [0, 22]]} />
              </ToolButton>
              <ToolButton $on aria-label="Aligner en bas">
                <Lines h={22} step={6} shift={9} bars={[[0, 22], [4, 18], [0, 22]]} />
              </ToolButton>
              <ToolButton aria-label="Orientation"><OrientationIcon /></ToolButton>
              <Drop label="Options d'orientation" />
            </ToolRow>
            <ToolRow>
              <ToolButton aria-label="Aligner à gauche">
                <Lines h={22} step={6} bars={[[0, 22], [0, 16], [0, 22], [0, 16]]} />
              </ToolButton>
              <ToolButton aria-label="Centrer">
                <Lines h={22} step={6} bars={[[0, 22], [3, 19], [0, 22], [3, 19]]} />
              </ToolButton>
              <ToolButton aria-label="Aligner à droite">
                <Lines h={22} step={6} bars={[[0, 22], [6, 22], [0, 22], [6, 22]]} />
              </ToolButton>
              <ToolButton aria-label="Diminuer le retrait"><IndentIcon out /></ToolButton>
              <ToolButton aria-label="Augmenter le retrait"><IndentIcon /></ToolButton>
            </ToolRow>
          </ToolStack>
          <TallDivider />
          <ToolStack>
            <ToolRow>
              <ToolButton aria-label="Renvoyer à la ligne"><WrapIcon /></ToolButton>
            </ToolRow>
            <ToolRow>
              <ToolButton aria-label="Fusionner"><MergeIcon /></ToolButton>
              <Drop label="Options de fusion" />
            </ToolRow>
          </ToolStack>
        </GroupContent>
        <Foot label="Alignement" launcher />
      </Group>

      <Group $w={221}>
        <GroupContent $pad={11}>
          <ToolStack>
            <ToolRow $pad={1}>
              <ComboBox w={197} value="Standard" label="Format de nombre" />
            </ToolRow>
            <ToolRow>
              <ToolButton aria-label="Comptabilité"><CurrencyIcon /></ToolButton>
              <Drop label="Devises" />
              <ToolButton><Glyph $size={27}>%</Glyph></ToolButton>
              <ToolButton><Glyph $size={14}>000</Glyph></ToolButton>
              <Divider />
              <ToolButton aria-label="Ajouter une décimale"><DecimalIcon /></ToolButton>
              <ToolButton aria-label="Réduire les décimales"><DecimalIcon less /></ToolButton>
            </ToolRow>
          </ToolStack>
        </GroupContent>
        <Foot label="Nombre" launcher />
      </Group>

      <Group $w={393}>
        <GroupContent $pad={4}>
          <StyleGrid>
            <BigButton>
              <BigIcon><ConditionalIcon /></BigIcon>
              <span>Mise en forme</span>
              <CaptionLine>conditionnelle <Chevron /></CaptionLine>
            </BigButton>
            <BigButton aria-label="Mettre sous forme de tableau"><BigIcon><TableStyleIcon /></BigIcon></BigButton>
            <BigButton aria-label="Styles de cellules"><BigIcon><TableStyleIcon cell /></BigIcon></BigButton>
          </StyleGrid>
        </GroupContent>
      </Group>

      <Group $w={172}>
        <GroupContent $pad={16}>
          <CellStack>
            <CellButton><CellsIcon />Insérer<Gap $w={5} /><Chevron /></CellButton>
            <CellButton aria-label="Supprimer"><CellsIcon /></CellButton>
          </CellStack>
        </GroupContent>
      </Group>

      <Group $w={263}>
        <GroupContent $pad={16}>
          <CellStack>
            <CellButton aria-label="Somme"><SumIcon /><Gap $w={3} /><Chevron /></CellButton>
            <CellButton aria-label="Remplir"><FillDownIcon /></CellButton>
          </CellStack>
          <EditIcons>
            <PlainButton aria-label="Trier et filtrer"><SortFilterIcon /></PlainButton>
            <PlainButton aria-label="Rechercher et sélectionner"><FindIcon /></PlainButton>
          </EditIcons>
        </GroupContent>
      </Group>

      <Group $w={117}>
        <GroupContent $pad={15}>
          <BigButton>
            <BigIcon><AnalysisIcon /></BigIcon>
            <span>Analyse de</span>
            <span>données</span>
          </BigButton>
        </GroupContent>
        <Foot label="Analysis" />
      </Group>

      <Group $w={159}>
        <GroupContent $pad={15}>
          <BigButton $disabled>
            <BigIcon $pad={7}><SensitivityIcon /></BigIcon>
            <span>Niveau de</span>
            <CaptionLine>confidentialité <Chevron color="#b1afad" /></CaptionLine>
          </BigButton>
        </GroupContent>
        <Foot label="Confidentialité" />
      </Group>
    </RibbonBody>
  </RibbonShell>
);

const Formula = () => (
  <FormulaBar>
    <NameBox>
      <NameInput defaultValue="E1" aria-label="Zone Nom" />
      <svg width={8} height={5} viewBox="0 0 8 5" fill="#777"><path d="M0 0H8L4 5Z" /></svg>
    </NameBox>
    <Grip><i /><i /><i /></Grip>
    <FormulaButtons>
      <PlainButton aria-label="Annuler la saisie">
        <svg width={18} height={17} viewBox="0 0 18 17" stroke="#c4c4c4" strokeWidth={2.500}><path d="M1 1 17 16M16 1 1 16" /></svg>
      </PlainButton>
      <PlainButton aria-label="Valider">
        <svg width={19} height={17} viewBox="0 0 19 17" fill="none" stroke="#c4c4c4" strokeWidth={3.500}><path d="M1 8.500 7 14.500 18 1" /></svg>
      </PlainButton>
      <PlainButton><FxLabel>fx</FxLabel></PlainButton>
    </FormulaButtons>
    <FormulaInput aria-label="Barre de formule" />
  </FormulaBar>
);

const Grid = () => (
  <SheetArea>
    <Sheet>
      <colgroup>
        <col style={{ width: 40 }} />
        {COLUMNS.map((c) => <col key={c} style={{ width: 120 }} />)}
      </colgroup>
      <thead>
        <tr>
          <Corner />
          {COLUMNS.map((c) => <ColHead key={c} $on={c === SELECTED}>{c}</ColHead>)}
        </tr>
      </thead>
      <tbody>
        {ROWS.map((r) => (
          <tr key={r}>
            <RowHead>{r}</RowHead>
            {COLUMNS.map((c) => <Cell key={c} $on={c === SELECTED && r > 1} />)}
          </tr>
        ))}
      </tbody>
    </Sheet>
    <Selection />
  </SheetArea>
);

const FormatDialog = () => {
  const [category, setCategory] = useState("Spécial");
  const [type, setType] = useState("Numéro de téléphone");
  return (
    <Dialog role="dialog" aria-labelledby="dialog-title">
      <DialogTitle>
        <DialogTitleText id="dialog-title">Format de cellule</DialogTitleText>
        <TitleButton>?</TitleButton>
        <TitleButton aria-label="Fermer">
          <svg width={16} height={16} viewBox="0 0 16 16" stroke="#000" strokeWidth={1.200}><path d="M0.500 0.500 15.500 15.500M15.500 0.500 0.500 15.500" /></svg>
        </TitleButton>
      </DialogTitle>
      <DialogTabs>
        {DIALOG_TABS.map(([name, w]) => (
          <DialogTab key={name} $w={w} $active={name === "Nombre"}>{name}</DialogTab>
        ))}
      </DialogTabs>
      <Panel>
        <PanelColumns>
          <Field $w={201}>
            <FieldLabel htmlFor="category"><u>C</u>atégorie :</FieldLabel>
            <ListFrame $h={424}>
              <ListSelect id="category" size={12} value={category} onChange={(e) => setCategory(e.target.value)}>
                {CATEGORIES.map((c) => <option key={c}>{c}</option>)}
              </ListSelect>
              <ScrollTrack>
                <ScrollArrow aria-label="Monter"><ScrollGlyph up color="#bfbfbf" /></ScrollArrow>
                <Spring />
                <ScrollArrow aria-label="Descendre"><ScrollGlyph color="#bfbfbf" /></ScrollArrow>
              </ScrollTrack>
            </ListFrame>
          </Field>
          <RightColumn>
            <Example><legend>Exemple</legend></Example>
            <Field>
              <FieldLabel htmlFor="type"><u>T</u>ype :</FieldLabel>
              <ListFrame $h={151}>
                <ListSelect id="type" size={7} value={type} onChange={(e) => setType(e.target.value)}>
                  {TYPES.map((t) => <option key={t}>{t}</option>)}
                </ListSelect>
                <ScrollTrack>
                  <ScrollArrow aria-label="Monter"><ScrollGlyph up color="#606060" /></ScrollArrow>
                  <ScrollThumb $h={83} />
                  <Spring />
                  <ScrollArrow aria-label="Descendre"><ScrollGlyph color="#606060" /></ScrollArrow>
                </ScrollTrack>
              </ListFrame>
            </Field>
            <RegionField>
              <FieldLabel htmlFor="region"><u>P</u>aramètres régionaux (emplacement) :</FieldLabel>
              <RegionWrap>
                <RegionSelect id="region"><option>Français (France)</option></RegionSelect>
                <RegionArrow>
                  <svg width={11} height={7} viewBox="0 0 11 7" fill="none" stroke="#444" strokeWidth={1.300}><path d="M0.500 0.500 5.500 6 10.500 0.500" /></svg>
                </RegionArrow>
              </RegionWrap>
            </RegionField>
          </RightColumn>
        </PanelColumns>
        <Hint>Les formats Spécial sont utilisés pour contrôler des valeurs de liste et de base de données.</Hint>
      </Panel>
      <DialogFoot>
        <DialogButton $primary>OK</DialogButton>
        <DialogButton>Annuler</DialogButton>
      </DialogFoot>
    </Dialog>
  );
};

export default function App() {
  return (
    <Window>
      <GlobalStyle />
      <Title />
      <Ribbon />
      <Formula />
      <Grid />
      <FormatDialog />
    </Window>
  );
}
